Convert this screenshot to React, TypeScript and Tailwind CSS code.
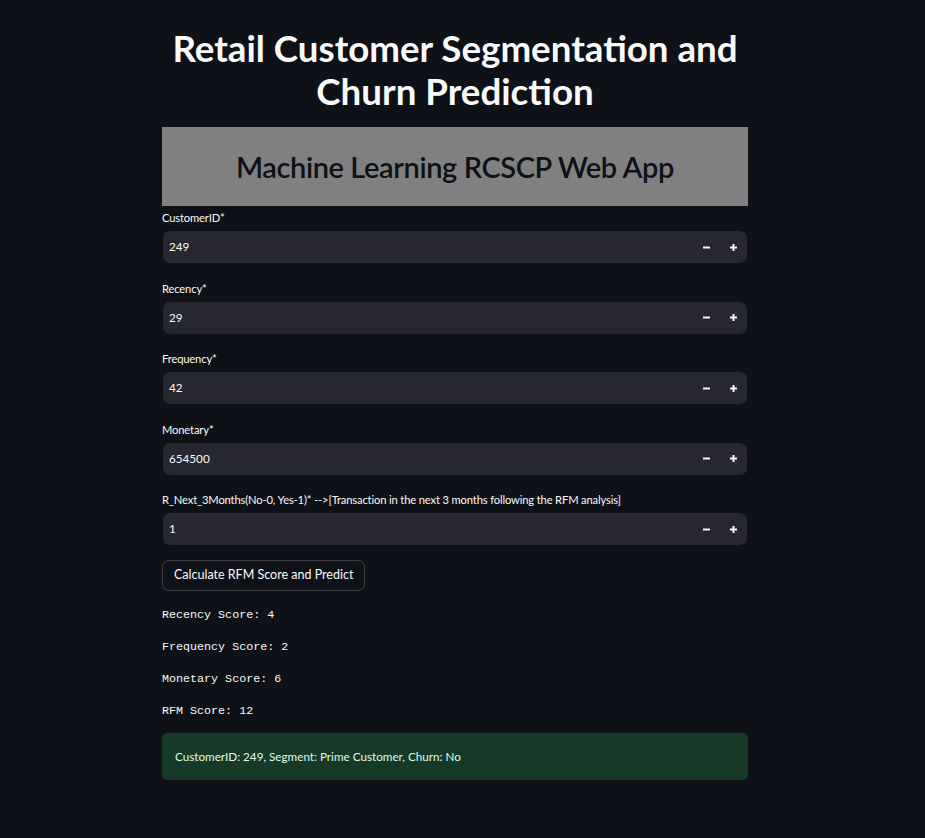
import React from "react";

const fields = [
  { label: "CustomerID*", value: "249" },
  { label: "Recency*", value: "29" },
  { label: "Frequency*", value: "42" },
  { label: "Monetary*", value: "654500" },
  {
    label: "R_Next_3Months(No-0, Yes-1)* -->[Transaction in the next 3 months following the RFM analysis]",
    value: "1",
  },
];

const scores = [
  "Recency Score: 4",
  "Frequency Score: 2",
  "Monetary Score: 6",
  "RFM Score: 12",
];

function NumberField({ label, value }: { label: string; value: string }) {
  return (
    <div className="flex flex-col">
      <label className="text-[11.2px] tracking-[-0.15px] leading-[16px] text-[#fafafa] mb-[5px] h-[16px]">{label}</label>
      <div className="flex items-center h-[32px] mx-px bg-[#262730] rounded-[7px]">
        <span className="flex-1 px-[6px] text-[11.7px] text-[#fafafa]">{value}</span>
        <button className="w-[27px] h-full flex items-center justify-center">
          <svg width="7" height="7" viewBox="0 0 7 7">
            <rect x="0" y="2.5" width="7" height="2" fill="#fafafa" />
          </svg>
        </button>
        <button className="w-[27px] h-full flex items-center justify-center">
          <svg width="7" height="7" viewBox="0 0 7 7">
            <rect x="0" y="2.5" width="7" height="2" fill="#fafafa" />
            <rect x="2.5" y="0" width="2" height="7" fill="#fafafa" />
          </svg>
        </button>
      </div>
    </div>
  );
}

export default function App() {
  return (
    <div
      className="min-h-screen bg-[#0e1117] text-[#fafafa]"
      style={{ fontFamily: "Lato, 'Noto Sans', sans-serif" }}
    >
      <div className="w-[586px] ml-[162px] pt-[27px]">
        <h1 className="text-center font-bold text-[36.7px] leading-[43px] text-[#fafafa]">
          Retail Customer Segmentation and Churn Prediction
        </h1>
        <div className="mt-[14px] h-[79px] bg-[#808080] flex items-center justify-center">
          <h2 className="text-[29px] font-semibold text-[#0e1117] tracking-[-0.4px]">
            Machine Learning RCSCP Web App
          </h2>
        </div>
        <div className="flex flex-col gap-[17.5px] mt-[4px]">
          {fields.map((f) => (
            <NumberField key={f.label} label={f.label} value={f.value} />
          ))}
        </div>
        <button className="mt-[15px] h-[31px] px-[11px] border border-[#fafafa]/20 rounded-[7px] text-[12.5px] text-[#fafafa]">
          Calculate RFM Score and Predict
        </button>
        <div className="mt-[16px] flex flex-col gap-[16px]">
          {scores.map((s) => (
            <div
              key={s}
              className="text-[11.7px] leading-[16px] text-[#fafafa] whitespace-pre"
              style={{ fontFamily: "'Liberation Mono', monospace" }}
            >
              {s}
            </div>
          ))}
        </div>
        <div className="mt-[14px] h-[47px] bg-[#173928] rounded-[5px] flex items-center px-[13px] text-[11.7px] text-[#dffde9]">
          CustomerID: 249, Segment: Prime Customer, Churn: No
        </div>
      </div>
    </div>
  );
}
